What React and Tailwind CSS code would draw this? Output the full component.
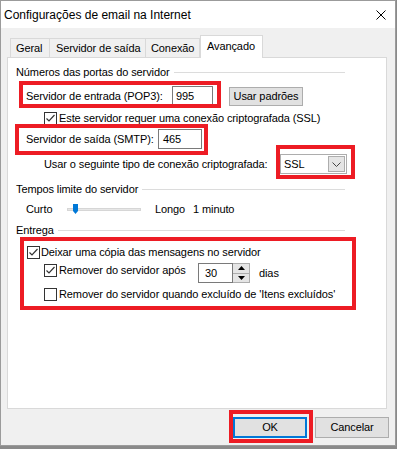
import React from 'react';

const font = { fontFamily: '"Segoe UI", "Liberation Sans", Arial, sans-serif' };

const Check = ({ checked }) => (
  <span className="flex h-[13px] w-[13px] shrink-0 items-center justify-center border border-[#333333] bg-white">
    {checked && (
      <svg width="11" height="11" viewBox="0 0 11 11">
        <path d="M1.5 5.5 L4 8 L9.5 2" fill="none" stroke="#333333" strokeWidth="1.2" />
      </svg>
    )}
  </span>
);

const GroupHeader = ({ label }) => (
  <div className="ml-[8px] flex h-[14px] w-[329px] items-center">
    <span>{label}</span>
    <span className="ml-[4px] h-px flex-1 bg-[#dcdcdc]" />
  </div>
);

const RedBox = ({ className }) => (
  <div className={`pointer-events-none absolute border-[4px] border-[#ed1c24] ${className}`} />
);

export default function App() {
  return (
    <div className="relative h-[449px] w-[397px] whitespace-nowrap bg-[#8a8a8a] text-[11px] leading-none tracking-[-0.1px] text-black" style={font}>
      <div className="flex h-[446px] w-[396px] flex-col border border-[#9b9b9b] bg-[#f0f0f0]">
        {/* title bar */}
        <div className="flex h-[27px] shrink-0 items-center justify-between bg-white pl-[3px] pr-[9px]">
          <span className="text-[12px] tracking-normal">Configurações de email na Internet</span>
          <svg width="10" height="10" viewBox="0 0 10 10">
            <path d="M0.5 0.5 L9.5 9.5 M9.5 0.5 L0.5 9.5" stroke="#000" strokeWidth="1" />
          </svg>
        </div>

        {/* tabs */}
        <div className="mt-[7px] flex items-end pl-[9px]">
          <div className="flex h-[19px] w-[40px] items-center border border-b-0 border-[#d9d9d9] pl-[5px]">Geral</div>
          <div className="flex h-[19px] w-[96px] items-center border border-b-0 border-l-0 border-[#d9d9d9] pl-[6px]">Servidor de saída</div>
          <div className="flex h-[19px] w-[54px] items-center border border-b-0 border-l-0 border-[#d9d9d9] pl-[5px]">Conexão</div>
          <div className="relative z-10 mb-[-1px] flex h-[23px] w-[63px] items-start border border-b-0 border-[#d9d9d9] bg-white pl-[6px] pt-[5px]">Avançado</div>
        </div>

        {/* panel */}
        <div className="ml-[6px] flex h-[352px] w-[380px] flex-col border border-[#d9d9d9] bg-white pt-[7px]">
          <GroupHeader label="Números das portas do servidor" />

          <div className="mt-[7px] flex h-[20px] items-center pl-[18px]">
            <span className="w-[146px]">Servidor de entrada (POP3):</span>
            <div className="flex h-[20px] w-[41px] items-center border border-[#7a7a7a] bg-white pl-[3px]">995</div>
            <button className="ml-[16px] h-[19px] w-[74px] border border-[#adadad] bg-[#e1e1e1] text-[11px]" style={font}>Usar padrões</button>
          </div>

          <div className="mt-[5px] flex h-[15px] items-center gap-[2px] pl-[36px]">
            <Check checked />
            <span>Este servidor requer uma conexão criptografada (SSL)</span>
          </div>

          <div className="mt-[3px] flex h-[20px] items-center pl-[18px]">
            <span className="w-[132px]">Servidor de saída (SMTP):</span>
            <div className="flex h-[20px] w-[44px] items-center border border-[#7a7a7a] bg-white pl-[4px]">465</div>
          </div>

          <div className="mt-[5px] flex h-[20px] items-center pl-[36px]">
            <span className="w-[236px]">Usar o seguinte tipo de conexão criptografada:</span>
            <div className="flex h-[20px] w-[67px] items-center justify-between border border-[#adadad] bg-white pl-[3px] pr-[1px]">
              <span>SSL</span>
              <span className="flex h-[16px] w-[17px] items-center justify-center border border-[#adadad] bg-[#e5e5e5]">
                <svg width="9" height="5" viewBox="0 0 9 5">
                  <path d="M0.5 0.5 L4.5 4.5 L8.5 0.5" fill="none" stroke="#444" strokeWidth="1" />
                </svg>
              </span>
            </div>
          </div>

          <div className="mt-[8px]">
            <GroupHeader label="Tempos limite do servidor" />
          </div>

          <div className="mt-[5px] flex h-[16px] items-center pl-[18px]">
            <span className="w-[41px]">Curto</span>
            <div className="relative flex h-[16px] w-[74px] items-center">
              <div className="h-[3px] w-full border border-[#d6d6d6] bg-[#e7e7e7]" />
              <svg className="absolute left-[6px] top-[3px]" width="5" height="10" viewBox="0 0 5 10">
                <path d="M0 0 H5 V7 L2.5 10 L0 7 Z" fill="#0078d7" />
              </svg>
            </div>
            <span className="ml-[14px] w-[38px]">Longo</span>
            <span>1 minuto</span>
          </div>

          <div className="mt-[6px]">
            <GroupHeader label="Entrega" />
          </div>

          <div className="mt-[8px] flex h-[14px] items-center gap-[1px] pl-[19px]">
            <Check checked />
            <span>Deixar uma cópia das mensagens no servidor</span>
          </div>

          <div className="mt-[4px] flex h-[20px] items-center pl-[36px]">
            <div className="flex w-[154px] items-center gap-[2px] self-start pt-[1px]">
              <Check checked />
              <span>Remover do servidor após</span>
            </div>
            <div className="flex h-[20px] w-[35px] items-center border border-[#7a7a7a] bg-white pl-[6px]">30</div>
            <div className="flex h-[20px] w-[17px] flex-col border border-l-0 border-[#adadad]">
              <div className="flex flex-1 items-center justify-center border-b border-[#adadad] bg-[#e5e5e5]">
                <svg width="7" height="4" viewBox="0 0 7 4"><path d="M0 4 L3.5 0 L7 4 Z" fill="#000" /></svg>
              </div>
              <div className="flex flex-1 items-center justify-center bg-[#e5e5e5]">
                <svg width="7" height="4" viewBox="0 0 7 4"><path d="M0 0 L3.5 4 L7 0 Z" fill="#000" /></svg>
              </div>
            </div>
            <span className="ml-[9px]">dias</span>
          </div>

          <div className="mt-[4px] flex h-[14px] items-center gap-[2px] pl-[36px]">
            <Check />
            <span>Remover do servidor quando excluído de 'Itens excluídos'</span>
          </div>
        </div>

        {/* buttons */}
        <div className="mt-[8px] flex gap-[8px] pl-[232px]">
          <button className="h-[21px] w-[74px] border-2 border-[#0078d7] bg-[#e1e1e1] text-[11px]" style={font}>OK</button>
          <button className="h-[21px] w-[74px] border border-[#adadad] bg-[#e1e1e1] text-[11px]" style={font}>Cancelar</button>
        </div>
      </div>

      {/* annotation boxes */}
      <RedBox className="left-[19px] top-[81px] h-[27px] w-[202px]" />
      <RedBox className="left-[15px] top-[124px] h-[31px] w-[193px]" />
      <RedBox className="left-[276px] top-[145px] h-[34px] w-[79px]" />
      <RedBox className="left-[20px] top-[237px] h-[73px] w-[336px]" />
      <RedBox className="left-[229px] top-[410px] h-[33px] w-[84px]" />
    </div>
  );
}
